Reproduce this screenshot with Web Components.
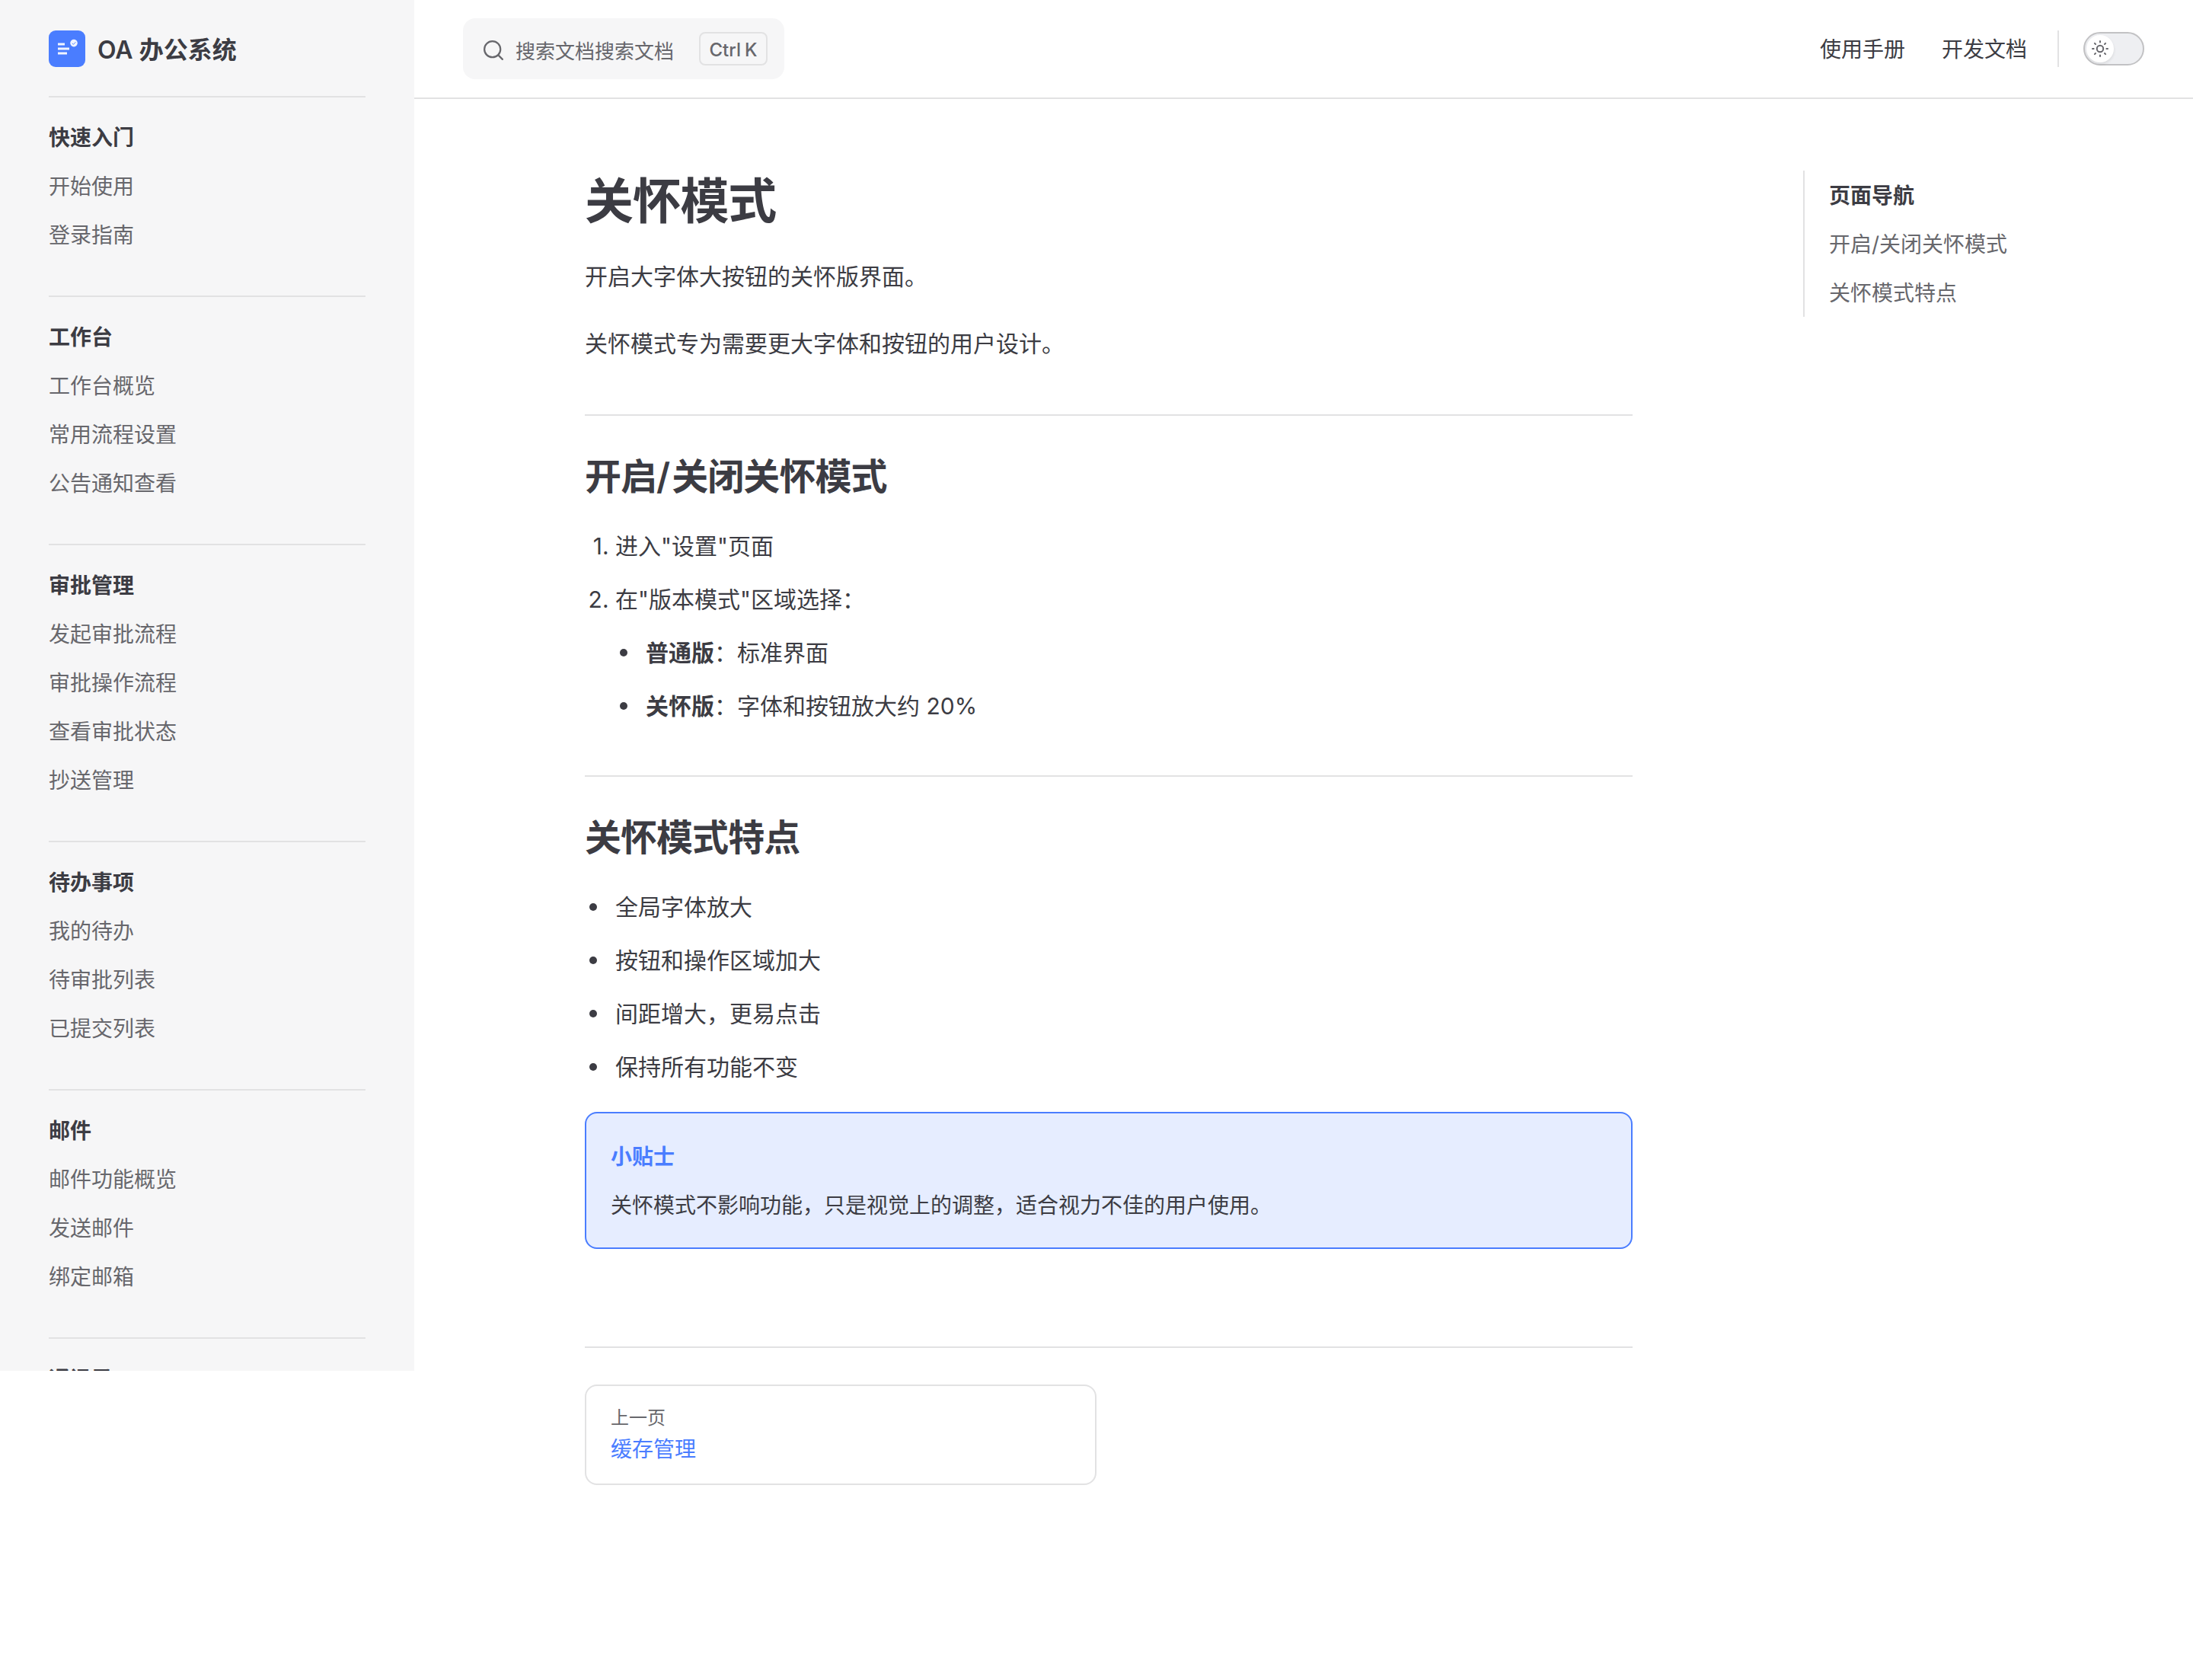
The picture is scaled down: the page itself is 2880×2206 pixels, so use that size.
<!DOCTYPE html>
<html lang="zh-CN">
<head>
<meta charset="utf-8">
<title>关怀模式 | OA 办公系统</title>
<style>
:root{--text-1:#3c3c43;--text-2:#67676c;--divider:#e2e2e3;--alt:#f6f6f7;--brand:#4a7dff;--soft:#e6edff}
html{background:#fff}
body{margin:0;font-family:Inter,"Noto Sans CJK SC",sans-serif;font-size:32px;line-height:48px;color:var(--text-1);-webkit-font-smoothing:antialiased;font-synthesis:style;overflow:hidden}
</style>
</head>
<body>
<oa-layout>
  <oa-sidebar slot="sidebar">
    <oa-brand slot="brand">OA 办公系统</oa-brand>
    <oa-group heading="快速入门" items="开始使用,登录指南"></oa-group>
    <oa-group heading="工作台" items="工作台概览,常用流程设置,公告通知查看"></oa-group>
    <oa-group heading="审批管理" items="发起审批流程,审批操作流程,查看审批状态,抄送管理"></oa-group>
    <oa-group heading="待办事项" items="我的待办,待审批列表,已提交列表"></oa-group>
    <oa-group heading="邮件" items="邮件功能概览,发送邮件,绑定邮箱"></oa-group>
    <oa-group heading="通讯录" items=""></oa-group>
  </oa-sidebar>
  <oa-nav slot="nav">
    <oa-search slot="search">搜索文档搜索文档</oa-search>
    <oa-link>使用手册</oa-link>
    <oa-link>开发文档</oa-link>
  </oa-nav>
  <oa-article></oa-article>
  <oa-outline slot="aside" heading="页面导航" items="开启/关闭关怀模式,关怀模式特点"></oa-outline>
</oa-layout>
<script>
function define(name, render) {
  customElements.define(name, class extends HTMLElement {
    constructor() {
      super();
      this.attachShadow({ mode: 'open' });
    }
    connectedCallback() {
      this.shadowRoot.innerHTML = '<style>*,:host{box-sizing:border-box}:host{display:block}</style>' + render(this);
    }
  });
}
const list = (el) => (el.getAttribute('items') || '').split(',').filter(Boolean);

define('oa-layout', () => `
<style>
:host{display:flex;align-items:flex-start;width:2880px;height:2206px}
.side{width:544px;flex:none}
.page{flex:1;min-width:0}
.cols{display:flex;padding:94px 0 0 224px;align-items:flex-start}
.content{width:1376px;margin-right:224px}
</style>
<div class="side"><slot name="sidebar"></slot></div>
<div class="page"><slot name="nav"></slot>
  <div class="cols"><main class="content"><slot></slot></main><slot name="aside"></slot></div>
</div>`);

define('oa-sidebar', () => `
<style>
:host{height:1800px;overflow:hidden;background:var(--alt);padding:0 64px}
</style>
<slot name="brand"></slot><nav><slot></slot></nav>`);

define('oa-brand', () => `
<style>
:host{display:flex;align-items:center;height:128px;border-bottom:2px solid var(--divider);font-weight:600;font-size:32px;gap:16px}
svg{width:48px;height:48px;flex:none;margin-top:2px}
span{padding-top:5px}
</style>
<svg viewBox="0 0 48 48"><rect width="48" height="48" rx="9" fill="#4a7dff"/>
<g fill="#fff" fill-opacity=".92"><rect x="12" y="16.5" width="9" height="3"/><rect x="12" y="22.5" width="15" height="3"/><rect x="12" y="28.5" width="12" height="3"/><circle cx="33" cy="16.6" r="4.8"/></g>
<path d="M30.8 16.8l1.6 1.6 3-3.2" fill="none" stroke="#4a7dff" stroke-width=".9"/></svg>
<span><slot></slot></span>`);

define('oa-group', (el) => `
<style>
:host{padding:20px 0 48px;border-top:2px solid var(--divider);font-size:28px}
:host(:first-of-type){border-top:0}
h2,a{display:block;margin:0;font-size:28px;line-height:48px;padding:9px 0 7px}
h2{font-weight:700}
a{color:var(--text-2)}
</style>
<h2>${el.getAttribute('heading')}</h2>${list(el).map(t => `<a>${t}</a>`).join('')}`);

define('oa-nav', () => `
<style>
:host{display:flex;align-items:center;height:130px;border-bottom:2px solid var(--divider);padding:0 64px}
.links{display:flex;margin-left:auto;gap:48px}
.bar{width:2px;height:48px;background:var(--divider);margin:0 32px 0 40px}
</style>
<slot name="search"></slot><div class="links"><slot></slot></div><div class="bar"></div><oa-switch></oa-switch>`);

define('oa-link', () => `<style>:host{font-size:28px;padding-top:2px}</style><slot></slot>`);

define('oa-search', () => `
<style>
:host{display:flex;align-items:center;width:422px;height:80px;border-radius:16px;background:var(--alt);color:var(--text-2);font-size:26px;padding:0 22px 0 26px}
svg{width:28px;height:28px;margin:4px 15px 0 0;flex:none}
kbd{margin-left:auto;width:90px;height:44px;border:2px solid var(--divider);border-radius:8px;font:500 24px/43px Inter,sans-serif;display:flex;justify-content:center;gap:5px}
.t{padding-top:7px}
</style>
<svg viewBox="0 0 20 20" fill="none" stroke="currentColor" stroke-width="1.6"><path d="M14.386 14.386l4.0877 4.0877-4.0877-4.0877c-2.9418 2.9419-7.7115 2.9419-10.6533 0-2.9419-2.9418-2.9419-7.7115 0-10.6533 2.9418-2.9419 7.7115-2.9419 10.6533 0 2.9419 2.9418 2.9419 7.7115 0 10.6533z" stroke-linejoin="round"/></svg>
<span class="t"><slot></slot></span><kbd><span>Ctrl</span><span>K</span></kbd>`);

define('oa-switch', () => `
<style>
:host{display:flex;flex:none;width:80px;height:44px;border:2px solid #c2c2c4;border-radius:22px;background:#eeeff2;padding:2px}
.knob{width:36px;height:36px;border-radius:50%;background:#fff;display:flex;align-items:center;justify-content:center;box-shadow:0 2px 4px rgba(0,0,0,.04),0 2px 4px rgba(0,0,0,.06)}
svg{width:24px;height:24px}
</style>
<div class="knob"><svg viewBox="0 0 24 24" fill="none" stroke="#67676c" stroke-width="2" stroke-linecap="round"><circle cx="12" cy="12" r="4.2"/><path d="M12 2v1.6M12 20.4V22M2 12h1.6M20.4 12H22M4.9 4.9l1.1 1.1M18 18l1.1 1.1M4.9 19.1L6 18M18 6l1.1-1.1"/></svg></div>`);

define('oa-article', () => `
<style>
:host{font-size:30px}
h1{margin:0;font-size:64px;line-height:80px;font-weight:600;letter-spacing:-.02em}
p{margin:32px 0;line-height:56px}
h1+p{margin-top:31px}
h2{margin:64px 0 32px;padding-top:48px;border-top:2px solid var(--divider);font-size:48px;line-height:64px;font-weight:600;letter-spacing:-.02em}
p+h2{margin-top:65px}
h2 i{font-style:normal;letter-spacing:2px}
ul,ol{margin:32px 0;padding-left:40px;line-height:54px}
li+li{margin-top:16px}
li>ul{margin:16px 0 0}
ul{list-style:none}
ul>li::before{content:"";display:inline-block;width:10px;height:10px;border-radius:50%;background:currentColor;margin:0 24px 0 -34px;vertical-align:6px}
ol>li::marker{font-variant-numeric:normal}
strong{font-weight:600}
</style>
<h1>关怀模式</h1>
<p>开启大字体大按钮的关怀版界面。</p>
<p>关怀模式专为需要更大字体和按钮的用户设计。</p>
<h2>开启<i>/</i>关闭关怀模式</h2>
<ol><li>进入"设置"页面</li><li>在"版本模式"区域选择：<ul><li><strong>普通版</strong>：标准界面</li><li><strong>关怀版</strong>：字体和按钮放大约 20%</li></ul></li></ol>
<h2>关怀模式特点</h2>
<ul><li>全局字体放大</li><li>按钮和操作区域加大</li><li>间距增大，更易点击</li><li>保持所有功能不变</li></ul>
<oa-tip heading="小贴士">关怀模式不影响功能，只是视觉上的调整，适合视力不佳的用户使用。</oa-tip>
<oa-pager label="上一页">缓存管理</oa-pager>`);

define('oa-tip', (el) => `
<style>
:host{border:2px solid var(--brand);border-radius:16px;background:var(--soft);padding:33px 32px 15px;font-size:28px;line-height:48px}
p{margin:0 0 16px}
.h{font-weight:600;color:var(--brand)}
</style>
<p class="h">${el.getAttribute('heading')}</p><p><slot></slot></p>`);

define('oa-pager', (el) => `
<style>
:host{margin-top:128px;border-top:2px solid var(--divider);padding-top:48px}
a{display:block;width:672px;border:2px solid var(--divider);border-radius:16px;padding:22px 32px 25px;line-height:40px}
span{display:block;font-size:24px;color:var(--text-2)}
.t{font-size:28px;color:var(--brand);padding-top:1px}
</style>
<a><span>${el.getAttribute('label')}</span><span class="t"><slot></slot></span></a>`);

define('oa-outline', (el) => `
<style>
:host{border-left:2px solid var(--divider);padding-left:32px;font-size:28px;line-height:62px}
.h{font-weight:600}
.h,a{display:block;padding:2px 0 0}
a{color:var(--text-2)}
</style>
<div class="h">${el.getAttribute('heading')}</div>${list(el).map(t => `<a>${t}</a>`).join('')}`);
</script>
</body>
</html>
